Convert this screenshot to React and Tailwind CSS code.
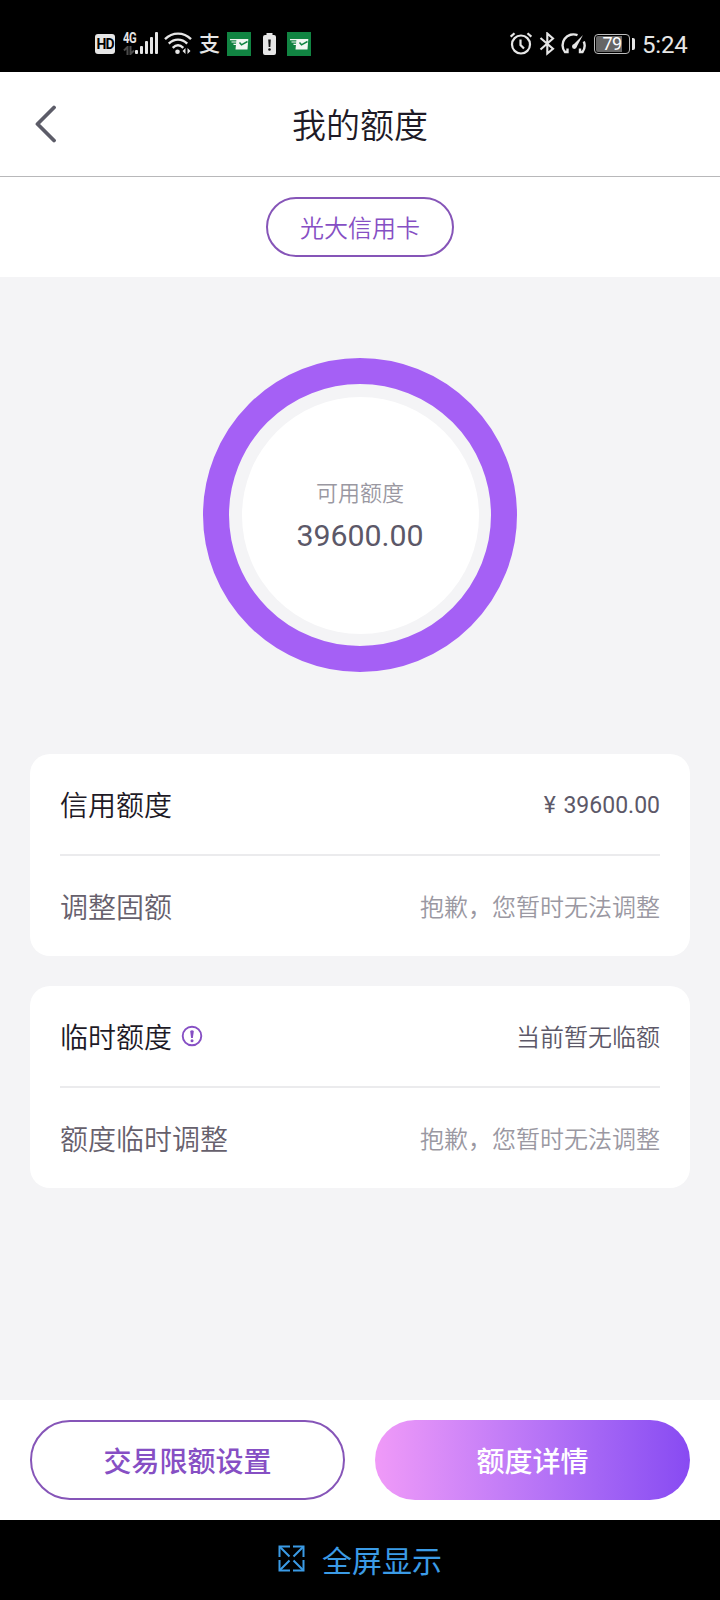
import React from 'react';

const limitCards = [
  {
    id: 'credit',
    title: '信用额度',
    amount: '¥ 39600.00',
    action: '调整固额',
    hint: '抱歉，您暂时无法调整',
  },
  {
    id: 'temp',
    title: '临时额度',
    info: true,
    status: '当前暂无临额',
    action: '额度临时调整',
    hint: '抱歉，您暂时无法调整',
  },
];

function MailIcon({ className }) {
  return (
    <svg className={className} width="24" height="24" viewBox="0 0 24 24" fill="none">
      <rect width="24" height="24" fill="#118442" />
      <path d="M9.5 7H21.300L20.500 17.500H8.500L9 12.500Z" fill="#f2f7f3" />
      <path d="M3 7.600H10M4.500 10H10M6.500 12.400H10" stroke="#f2f7f3" strokeWidth="1.200" />
      <path d="M12.500 10.500L14.500 12.800L20.500 9.500" stroke="#118442" strokeWidth="1.500" />
    </svg>
  );
}

function StatusBar() {
  return (
    <div className="flex h-[72px] items-start bg-black pt-8 pl-[95px] text-[#e6e6e6]">
      <div className="mt-0.5 flex h-5 w-5 items-center justify-center rounded-[3px] bg-[#e6e6e6] font-[Roboto] text-sm leading-none font-bold tracking-[-1px] text-black">
        HD
      </div>
      {/* network type and signal */}
      <div className="ml-2 flex w-3 flex-col">
        <span className="h-3 origin-left scale-x-80 font-[Roboto] text-sm leading-[12px] font-bold tracking-[-0.5px]">4G</span>
        <svg className="mt-0.5" width="12" height="9" viewBox="0 0 12 9" fill="none" stroke="#4a4a4a" strokeWidth="2">
          <path d="M4.500 9V1L1 4.500M7.500 0V8L11 4.500" />
        </svg>
      </div>
      <svg width="24" height="24" viewBox="0 0 24 24" fill="#e6e6e6">
        <rect x="0" y="18" width="3" height="4" rx="1" />
        <rect x="5" y="14" width="3" height="8" rx="1" />
        <rect x="10" y="9" width="3" height="13" rx="1" />
        <rect x="15" y="5" width="3" height="17" rx="1" />
        <rect x="20" y="0" width="3" height="22" rx="1" />
      </svg>
      <svg className="ml-[5px]" width="28" height="24" viewBox="0 0 28 24" fill="none" stroke="#e6e6e6" strokeWidth="2.400">
        <path d="M1 7.200C8.500 -.3 19.500 -.3 27 7.200" />
        <path d="M4.800 11.700C10.200 6.300 17.800 6.300 23.200 11.700" />
        <path d="M8.700 15.900C12 12.700 16 12.700 19.300 15.900" />
        <circle cx="13.500" cy="19.700" r="2.300" fill="#e6e6e6" stroke="none" />
        <path d="M21.500 16V22L18.500 19ZM23.500 16V22L26.500 19Z" fill="#e6e6e6" stroke="none" />
      </svg>
      <span className="mt-px ml-[7px] w-[23px] text-[21px] leading-[23px] font-medium">支</span>
      <MailIcon className="ml-[5px]" />
      <svg className="ml-3" width="13" height="24" viewBox="0 0 13 24">
        <path d="M3.500 3V1H9.500V3H11Q13 3 13 5V21Q13 23 11 23H2Q0 23 0 21V5Q0 3 2 3Z" fill="#e6e6e6" />
        <path d="M5.200 7.500H7.800L7.300 15H5.700Z" fill="#111" />
        <circle cx="6.500" cy="17.500" r="1.300" fill="#111" />
      </svg>
      <MailIcon className="ml-[11px]" />

      <svg className="ml-[199px]" width="22" height="24" viewBox="0 0 22 24" fill="none" stroke="#e6e6e6" strokeWidth="2.200">
        <circle cx="11" cy="12.500" r="9" />
        <path d="M10.500 7.500V13L14 16.500M.7 4.700L4.500 1.200M21.300 4.700L17.500 1.200" />
      </svg>
      <svg className="ml-[7px]" width="16" height="24" viewBox="0 0 16 24" fill="none" stroke="#e6e6e6" strokeWidth="2.100">
        <path d="M1.500 6L14 16.800L8.300 21.500V1.500L14 6.500L1.500 17.500" />
      </svg>
      <svg className="ml-[6px]" width="26" height="24" viewBox="0 0 26 24" fill="none" stroke="#e6e6e6" strokeWidth="2.400">
        <path d="M6.500 16.500V20H4A10.800 10.800 0 0 1 16.500 3.200M22.800 9.500A10.800 10.800 0 0 1 21.500 20H19V16.500" />
        <path d="M22 3L15.300 15.500L11.500 13.500Z" fill="#e6e6e6" stroke="none" />
        <circle cx="13.300" cy="14.600" r="2.300" fill="#e6e6e6" stroke="none" />
      </svg>
      <div className="mt-0.5 ml-[7px] flex h-5 w-9 items-center justify-center rounded-[4px] border border-[#bdbdbd] bg-black p-px">
        <div className="flex h-full w-full items-center justify-center rounded-[2px] bg-linear-to-r from-[#666] from-80% to-black to-80% font-[Roboto] text-lg leading-none tracking-[-0.5px] text-white">
          79
        </div>
      </div>
      <div className="mt-1.5 ml-0.5 h-3 w-[3px] rounded-r-[2px] bg-[#e6e6e6]" />
      <span className="mt-px ml-[7px] font-[Roboto] text-2xl leading-[25px] tracking-[-0.2px]">5:24</span>
    </div>
  );
}

function Header() {
  return (
    <header className="flex h-[105px] items-center border-b border-[#b8b8ba] bg-white">
      <button className="w-[100px] pl-[35px]">
        <svg width="21" height="38" viewBox="0 0 21 38" fill="none" stroke="#5c5c68" strokeWidth="3.800" strokeLinecap="round" strokeLinejoin="round">
          <path d="M19 2.500L2.500 19L19 35.500" />
        </svg>
      </button>
      <h1 className="flex-1 pt-1 text-center text-[34px] leading-[48px] font-[350] text-[#1e1a26]">我的额度</h1>
      <div className="w-[100px]" />
    </header>
  );
}

function InfoIcon() {
  return (
    <svg className="-mt-[5px] ml-[9px]" width="22" height="22" viewBox="0 0 22 22" fill="none">
      <circle cx="11" cy="11" r="9.300" stroke="#864fc4" strokeWidth="1.900" />
      <path d="M9.200 6Q11 4.600 12.800 6L11.900 13H10.100Z" fill="#864fc4" />
      <circle cx="11" cy="15.800" r="1.500" fill="#864fc4" />
    </svg>
  );
}

function LimitCard({ card }) {
  return (
    <section className="rounded-[20px] bg-white px-[30px]">
      <div className="flex h-[100px] items-center justify-between">
        <div className="flex items-center pt-[5px] text-[28px] font-[350] text-[#1e1a26]">
          {card.title}
          {card.info && <InfoIcon />}
        </div>
        {card.amount ? (
          <span className="pt-1 text-[23px] text-[#5c5868] [word-spacing:2px]">{card.amount}</span>
        ) : (
          <span className="pt-[3px] text-2xl font-[350] text-[#5c5868]">{card.status}</span>
        )}
      </div>
      <div className="h-0.5 bg-[#ebebed]" />
      <div className="flex h-[100px] items-center justify-between">
        <span className="pt-[5px] text-[28px] font-[350] text-[#66606c]">{card.action}</span>
        <span className="pt-[3px] text-2xl font-[350] text-[#9a98a2]">{card.hint}</span>
      </div>
    </section>
  );
}

function App() {
  return (
    <div className="flex h-[1600px] w-[720px] flex-col overflow-hidden bg-[#f4f4f6] font-[Roboto,'Noto_Sans_CJK_SC',sans-serif]">
      <StatusBar />
      <Header />
      <div className="flex h-[100px] items-center justify-center bg-white">
        <button className="h-[60px] w-[188px] rounded-full border-2 border-[#8655b8] pt-[3px] text-2xl font-[350] text-[#864fc4]">
          光大信用卡
        </button>
      </div>

      <main className="flex-1 px-[30px] pt-[81px]">
        {/* available limit ring */}
        <div className="mx-auto flex h-[314px] w-[314px] items-center justify-center rounded-full border-[26px] border-[#a560f5]">
          <div className="flex h-[237px] w-[237px] flex-col items-center justify-center rounded-full bg-white pt-0.5">
            <span className="pt-0.5 text-[22px] leading-8 font-[350] text-[#9a98a2]">可用额度</span>
            <span className="mt-1.5 text-[30.3px] leading-10 text-[#5c5868]">39600.00</span>
          </div>
        </div>

        <div className="mt-[82px] flex flex-col gap-[30px]">
          {limitCards.map((card) => (
            <LimitCard key={card.id} card={card} />
          ))}
        </div>
      </main>

      <footer className="grid h-[120px] grid-cols-2 items-center gap-[30px] bg-white px-[30px]">
        <button className="h-20 rounded-full border-2 border-[#8655b8] pt-[5px] text-[28px] font-medium text-[#864fc4]">
          交易限额设置
        </button>
        <button className="h-20 rounded-full bg-linear-to-r from-[#f09af8] to-[#884af2] pt-[5px] text-[28px] font-medium text-white">
          额度详情
        </button>
      </footer>

      <div className="flex h-20 items-center justify-center gap-[17px] bg-black text-[30px] text-[#3b9be6]">
        <svg className="-mt-1" width="27" height="27" viewBox="0 0 27 27" fill="none" stroke="#3b9be6" strokeWidth="2">
          <path d="M1.500 12V1.500H12M15 1.500H25.500V12M25.500 15V25.500H15M12 25.500H1.500V15" />
          <path d="M2 2L11.500 11.500M25 2L15.500 11.500M25 25L15.500 15.500M2 25L11.500 15.500" />
        </svg>
        <span className="pt-0.5">全屏显示</span>
      </div>
    </div>
  );
}

export default App;
